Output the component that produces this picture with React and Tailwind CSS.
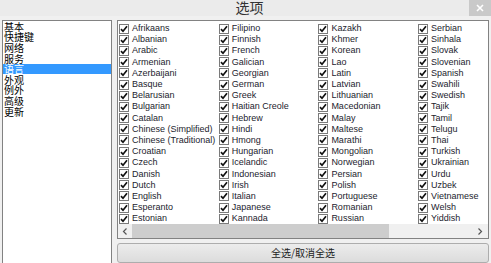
import React from "react";

const cols = [
  ["Afrikaans","Albanian","Arabic","Armenian","Azerbaijani","Basque","Belarusian","Bulgarian","Catalan","Chinese (Simplified)","Chinese (Traditional)","Croatian","Czech","Danish","Dutch","English","Esperanto","Estonian"],
  ["Filipino","Finnish","French","Galician","Georgian","German","Greek","Haitian Creole","Hebrew","Hindi","Hmong","Hungarian","Icelandic","Indonesian","Irish","Italian","Japanese","Kannada"],
  ["Kazakh","Khmer","Korean","Lao","Latin","Latvian","Lithuanian","Macedonian","Malay","Maltese","Marathi","Mongolian","Norwegian","Persian","Polish","Portuguese","Romanian","Russian"],
  ["Serbian","Sinhala","Slovak","Slovenian","Spanish","Swahili","Swedish","Tajik","Tamil","Telugu","Thai","Turkish","Ukrainian","Urdu","Uzbek","Vietnamese","Welsh","Yiddish"],
];

const menu = ["基本","快捷键","网络","服务","语言","外观","例外","高级","更新"];

function Check() {
  return (
    <span className="w-[10px] h-[10px] border border-[#7a7a7a] bg-white flex items-center justify-center shrink-0">
      <svg width="8" height="8" viewBox="0 0 8 8">
        <path d="M1 4.2 L3 6.3 L7 1.3" fill="none" stroke="#111" strokeWidth="1.7" />
      </svg>
    </span>
  );
}

export default function App() {
  return (
    <div className="w-[491px] h-[263px] overflow-hidden bg-[#f0f0f0] flex flex-col">
      <div className="h-[16px] bg-[#ebebeb] relative flex items-start justify-center shrink-0">
        <span className="text-[14px] leading-[15px] text-[#333] pl-[8px]" style={{ fontFamily: '"Noto Sans CJK SC", sans-serif' }}>选项</span>
        <div className="absolute right-0 top-0 w-[22px] h-[16px] bg-[#c9c9c9] flex items-center justify-center">
          <svg width="8" height="8" viewBox="0 0 8 8">
            <path d="M1 1 L7 7 M7 1 L1 7" stroke="#fff" strokeWidth="1.6" />
          </svg>
        </div>
      </div>
      <div className="flex pt-[4px] pl-[2px] flex-1 min-h-0">
        <div className="w-[110px] h-[260px] border border-[#828282] bg-white shrink-0 pt-[0.5px]" style={{ fontFamily: '"Noto Sans CJK SC", sans-serif' }}>
          {menu.map((m, i) => (
            <div
              key={m}
              className={`h-[10.6px] flex items-center text-[10px] leading-[10px] pl-[1px] ${i === 4 ? "bg-[#3399ff] text-white" : "text-black"}`}
            >
              {m}
            </div>
          ))}
        </div>
        <div className="ml-[5px] w-[372px] flex flex-col shrink-0">
          <div className="h-[222px] border border-[#828282] bg-white flex flex-col">
            <div className="flex pl-[1px] pt-[2px] flex-1" style={{ fontFamily: '"Liberation Sans", Arial, sans-serif' }}>
              {cols.map((c, ci) => (
                <div key={ci} className="w-[99.7px] flex flex-col shrink-0">
                  {c.map((l) => (
                    <div key={l} className="h-[11.2px] flex items-center gap-[3px]">
                      <Check />
                      <span className="text-[9px] leading-[11px] text-[#1c1c2e] whitespace-nowrap">{l}</span>
                    </div>
                  ))}
                </div>
              ))}
            </div>
            <div className="h-[14px] flex items-stretch bg-[#f0f0f0] shrink-0">
              <div className="w-[14px] flex items-center justify-center">
                <svg width="6" height="7" viewBox="0 0 6 7"><path d="M4.5 0.5 L1.5 3.5 L4.5 6.5" fill="none" stroke="#555" strokeWidth="1.2" /></svg>
              </div>
              <div className="w-[257px] bg-[#cdcdcd]" />
              <div className="flex-1" />
              <div className="w-[16px] flex items-center justify-center">
                <svg width="6" height="7" viewBox="0 0 6 7"><path d="M1.5 0.5 L4.5 3.5 L1.5 6.5" fill="none" stroke="#555" strokeWidth="1.2" /></svg>
              </div>
            </div>
          </div>
          <div className="mt-[4px] h-[22px] border border-[#adadad] rounded-[3px] bg-gradient-to-b from-[#ececec] to-[#dcdcdc] flex items-start justify-center pt-[2px]">
            <span className="text-[10px] leading-[14px] text-[#222]" style={{ fontFamily: '"Noto Sans CJK SC", sans-serif' }}>全选/取消全选</span>
          </div>
        </div>
      </div>
    </div>
  );
}
